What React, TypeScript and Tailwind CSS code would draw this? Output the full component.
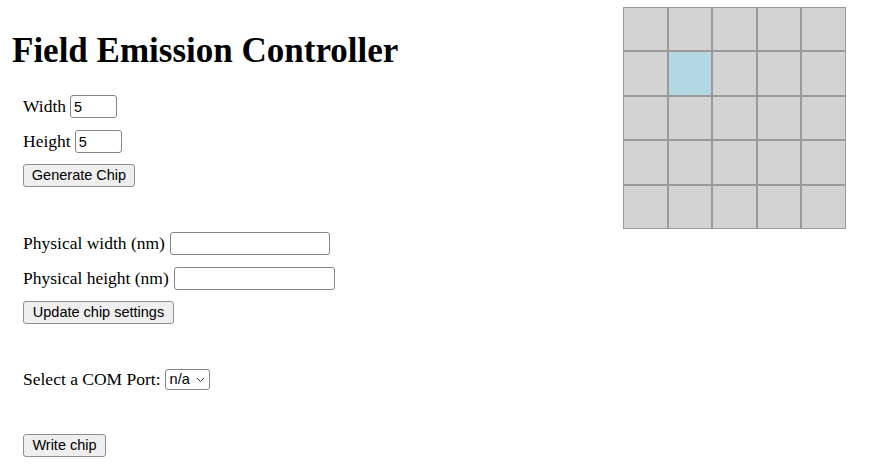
import React, { useState } from 'react';

// grid of emitter cells, (1,1) is the selected one
const ROWS = 5;
const COLS = 5;

export default function App() {
  const [width, setWidth] = useState('5');
  const [height, setHeight] = useState('5');
  const [physW, setPhysW] = useState('');
  const [physH, setPhysH] = useState('');
  const [selected, setSelected] = useState<[number, number]>([1, 1]);

  return (
    <div className="flex items-start bg-white pl-[12px] pt-[7px] text-black font-['Liberation_Serif',serif]">
      {/* Left column: controls */}
      <div className="w-[611px] shrink-0">
        <h1 className="mt-[24px] text-[35px] font-bold leading-[40px]">Field Emission Controller</h1>

        <div className="pl-[11px] text-[17.5px]">
          <div className="mt-[24px] flex h-[23px] items-center">
            <label>Width</label>
            <TextInput value={width} onChange={setWidth} className="ml-[4px] w-[47px]" />
          </div>
          <div className="mt-[12px] flex h-[23px] items-center">
            <label>Height</label>
            <TextInput value={height} onChange={setHeight} className="ml-[4px] w-[47px]" />
          </div>
          <div className="mt-[11px] flex h-[23px]">
            <Btn className="w-[112px]">Generate Chip</Btn>
          </div>

          <div className="mt-[45px] flex h-[23px] items-center">
            <label>Physical width (nm)</label>
            <TextInput value={physW} onChange={setPhysW} className="ml-[5px] w-[160px]" />
          </div>
          <div className="mt-[12px] flex h-[23px] items-center">
            <label>Physical height (nm)</label>
            <TextInput value={physH} onChange={setPhysH} className="ml-[5px] w-[161px]" />
          </div>
          <div className="mt-[11px] flex h-[23px]">
            <Btn className="w-[151px]">Update chip settings</Btn>
          </div>

          <div className="mt-[45px] flex h-[21px] items-center">
            <label>Select a COM Port:</label>
            <div className="relative ml-[4px] flex">
              <select className="h-[21px] w-[45px] appearance-none rounded-[3px] border border-[#858585] bg-white pl-[4px] text-[14.5px] leading-none font-['Liberation_Sans',sans-serif]">
                <option>n/a</option>
              </select>
              <svg
                className="pointer-events-none absolute right-[5px] top-[8px]"
                width="9"
                height="6"
                viewBox="0 0 9 6"
                fill="none"
                stroke="#333"
                strokeWidth="1"
              >
                <path d="M1 1l3.5 3.5L8 1" />
              </svg>
            </div>
          </div>

          <div className="mt-[44px] flex h-[23px]">
            <Btn className="w-[83px]">Write chip</Btn>
          </div>
        </div>
      </div>

      {/* Right column: chip preview */}
      <div className="grid grid-cols-5">
        {Array.from({ length: ROWS * COLS }).map((_, i) => {
          const r = Math.floor(i / COLS);
          const c = i % COLS;
          const on = selected[0] === r && selected[1] === c;
          return (
            <div
              key={i}
              onClick={() => setSelected([r, c])}
              className={`h-[44.4px] w-[44.5px] border border-[#9a9a9a] ${on ? 'bg-[#b3d7e3]' : 'bg-[#d3d3d3]'}`}
            />
          );
        })}
      </div>
    </div>
  );
}

const TextInput = ({ value, onChange, className }: { value: string; onChange: (v: string) => void; className: string }) => (
  <input
    type="text"
    value={value}
    onChange={(e) => onChange(e.target.value)}
    className={`h-[23px] rounded-[3px] border border-[#858585] bg-white px-[3px] text-[14.5px] font-['Liberation_Sans',sans-serif] outline-none ${className}`}
  />
);

const Btn = ({ children, className }: { children: React.ReactNode; className: string }) => (
  <button
    className={`h-[23px] rounded-[3px] border border-[#8f8f8f] bg-[#efefef] text-center text-[14.5px] leading-none font-['Liberation_Sans',sans-serif] ${className}`}
  >
    {children}
  </button>
);
